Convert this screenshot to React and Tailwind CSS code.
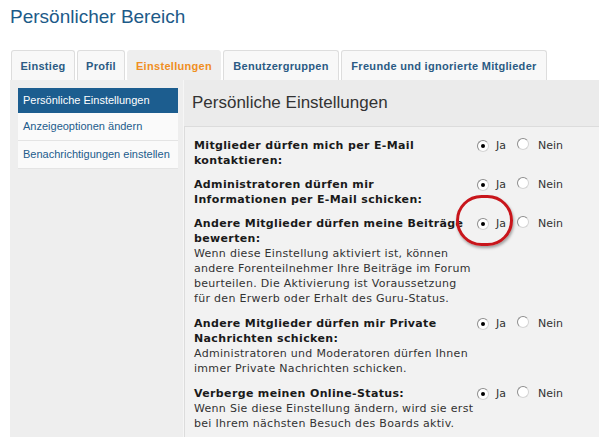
import React from 'react';

const tabs = [
  { label: 'Einstieg', w: 'w-[64px]' },
  { label: 'Profil', w: 'w-[48px]' },
  { label: 'Einstellungen', w: 'w-[94px]', active: true },
  { label: 'Benutzergruppen', w: 'w-[116px]' },
  { label: 'Freunde und ignorierte Mitglieder', w: 'w-[206px]' },
];

const navItems = [
  { label: 'Persönliche Einstellungen', active: true },
  { label: 'Anzeigeoptionen ändern' },
  { label: 'Benachrichtigungen einstellen' },
];

// lines broken the same way as the reference
const settings = [
  { label: ['Mitglieder dürfen mich per E-Mail', 'kontaktieren:'] },
  { label: ['Administratoren dürfen mir', 'Informationen per E-Mail schicken:'] },
  {
    label: ['Andere Mitglieder dürfen meine Beiträge', 'bewerten:'],
    desc: [
      'Wenn diese Einstellung aktiviert ist, können',
      'andere Forenteilnehmer Ihre Beiträge im Forum',
      'beurteilen. Die Aktivierung ist Voraussetzung',
      'für den Erwerb oder Erhalt des Guru-Status.',
    ],
    marked: true,
  },
  {
    label: ['Andere Mitglieder dürfen mir Private', 'Nachrichten schicken:'],
    desc: ['Administratoren und Moderatoren dürfen Ihnen', 'immer Private Nachrichten schicken.'],
  },
  {
    label: ['Verberge meinen Online-Status:'],
    desc: ['Wenn Sie diese Einstellung ändern, wird sie erst', 'bei Ihrem nächsten Besuch des Boards aktiv.'],
  },
];

const Radio = ({ checked }) => (
  <span className="relative inline-flex items-center justify-center w-[12px] h-[12px] rounded-full bg-white border border-[#8d8d8d] border-r-[#d4d4d4] border-b-[#d4d4d4]">
    {checked && <span className="w-[4px] h-[4px] rounded-full bg-black" />}
  </span>
);

const SettingRow = ({ label, desc, marked }) => (
  <div className={`relative flex ${desc ? 'mb-[1px]' : ''}`}>
    <div className="w-[283px] shrink-0 whitespace-nowrap">
      {label.map((l) => (
        <div key={l} className="font-bold text-[#1a1a1a] tracking-[0.35px]">{l}</div>
      ))}
      {desc && desc.map((l) => (
        <div key={l} className="text-[#333]">{l}</div>
      ))}
    </div>
    <div className="flex items-center h-[15px] text-[#333] tracking-normal">
      <Radio checked />
      <span className="ml-[7px]">Ja</span>
      <span className="ml-[11px]"><Radio /></span>
      <span className="ml-[9px]">Nein</span>
    </div>
    {marked && (
      <div className="absolute left-[262px] top-[-21px] w-[57px] h-[51px] rounded-full border-[3px] border-[#c8151b] shadow-[1px_2px_3px_rgba(0,0,0,0.35)]" />
    )}
  </div>
);

export default function App() {
  return (
    <div className="w-[599px] h-[437px] overflow-hidden bg-white font-['Liberation_Sans',Arial,sans-serif]">
      <h1 className="pl-[10px] pt-[5px] text-[19px] leading-[24px] text-[#1c5a88]">Persönlicher Bereich</h1>

      <div className="flex items-end gap-[2px] pl-[11px] mt-[21px] h-[30px]">
        {tabs.map((t) => (
          <div
            key={t.label}
            className={`${t.w} h-[30px] flex items-center justify-center pt-[2px] rounded-t-[3px] text-[11px] tracking-[0.3px] font-bold ${
              t.active
                ? 'bg-[#eeeeee] text-[#f08e22] border border-[#eeeeee]'
                : 'bg-[#f8f8f8] text-[#2b5b84] border border-[#dddddd] border-b-0'
            }`}
          >
            {t.label}
          </div>
        ))}
      </div>

      <div className="ml-[10px] flex bg-[#eeeeee] h-[400px]">
        <div className="w-[173px] shrink-0 pt-[8px] pl-[8px]">
          <div className="w-[160px] text-[11px]">
            {navItems.map((n) => (
              <div
                key={n.label}
                className={`flex items-center pl-[5px] ${
                  n.active
                    ? 'h-[25px] bg-[#1c5d8f] text-white'
                    : 'h-[28px] bg-[#fafafa] text-[#235c8c] border-b border-[#e4e4e4]'
                }`}
              >
                {n.label}
              </div>
            ))}
          </div>
        </div>

        <div className="flex-1 border-l border-[#f6f6f6] bg-[#ebebeb]">
          <div className="h-[46px] pl-[8px] flex items-center text-[17px] text-[#333]">Persönliche Einstellungen</div>
          <div className="border-t border-l border-[#dcdcdc] bg-[#f2f2f2] pl-[9px] pt-[11px] h-[400px] font-['DejaVu_Sans',Verdana,sans-serif] text-[11px] leading-[15px] tracking-[0.3px] flex flex-col gap-[9px]">
            {settings.map((s) => (
              <SettingRow key={s.label[0]} {...s} />
            ))}
          </div>
        </div>
      </div>
    </div>
  );
}
